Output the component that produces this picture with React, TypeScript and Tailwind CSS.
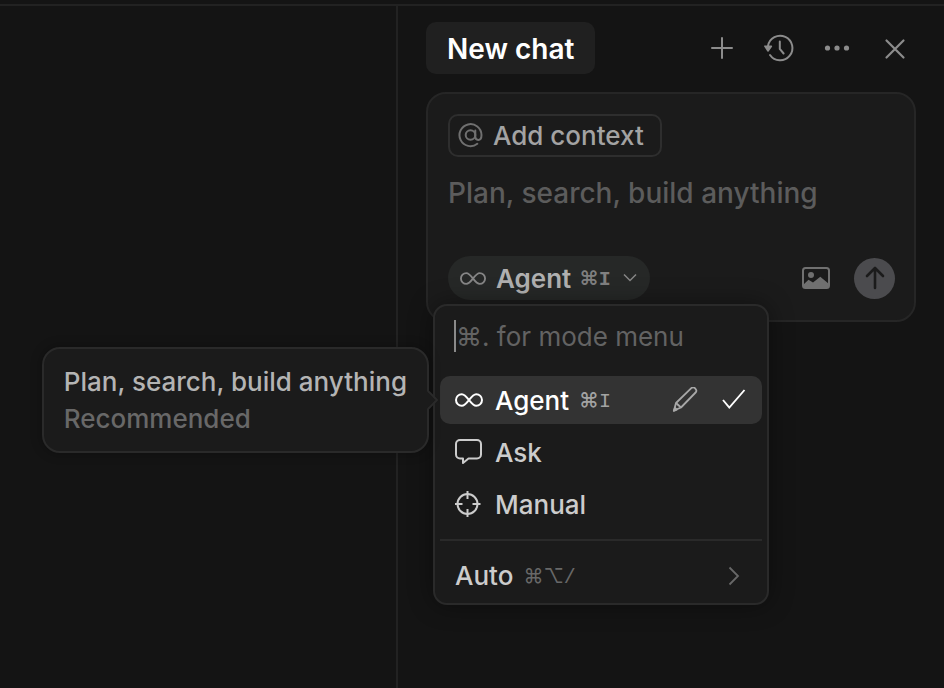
import type { ReactNode } from 'react'

type IconProps = {
  className?: string
}

type ModeRowProps = {
  icon: ReactNode
  label: string
  shortcut?: string
  active?: boolean
}

const InfinityIcon = ({ className }: IconProps) => (
  <svg viewBox="0 0 28 16" fill="none" stroke="currentColor" className={className}>
    <path
      d="M14 8C11.4 4.6 9.6 2.2 6.8 2.2a5.8 5.8 0 0 0 0 11.6C9.6 13.8 11.4 11.4 14 8s4.4-5.8 7.2-5.8a5.8 5.8 0 0 1 0 11.6C18.4 13.8 16.6 11.4 14 8Z"
      strokeWidth="2"
    />
  </svg>
)

const PlusIcon = () => (
  <svg width="28" height="28" viewBox="0 0 28 28" fill="none" stroke="currentColor" strokeWidth="2" strokeLinecap="round">
    <path d="M15 4v20M5 14h20" />
  </svg>
)

const HistoryIcon = () => (
  <svg width="32" height="32" viewBox="0 0 32 32" fill="none" stroke="currentColor" strokeWidth="2" strokeLinecap="round">
    <path d="M5 14A12.3 12.3 0 1 1 7 23" />
    <path d="M16.8 9.5v7.5l3.800 4.500" />
    <path d="M1.800 14.200h6.600L5 19Z" fill="currentColor" strokeWidth="1.500" strokeLinejoin="round" />
  </svg>
)

const DotsIcon = () => (
  <svg width="28" height="28" viewBox="0 0 28 28" fill="currentColor">
    <circle cx="4.500" cy="14" r="2.600" />
    <circle cx="14" cy="14" r="2.600" />
    <circle cx="23.500" cy="14" r="2.600" />
  </svg>
)

const CloseIcon = () => (
  <svg width="28" height="28" viewBox="0 0 28 28" fill="none" stroke="currentColor" strokeWidth="2.200" strokeLinecap="round">
    <path d="M5.500 6.500l17 17M22.500 6.500l-17 17" />
  </svg>
)

const AtIcon = () => (
  <svg width="26" height="26" viewBox="0 0 26 26" fill="none" stroke="currentColor" strokeWidth="2" strokeLinecap="round">
    <circle cx="12.500" cy="12" r="4.800" />
    <path d="M17.300 7.500v6.300c0 2 1.200 3.100 2.900 3.100 2.200 0 3.300-2 3.300-4.900A11 11 0 1 0 19.300 20.800" />
  </svg>
)

const ImageIcon = () => (
  <svg width="28" height="22" viewBox="0 0 28 22" fill="none">
    <rect x="1" y="1" width="26" height="20" rx="2.500" stroke="currentColor" strokeWidth="2" />
    <circle cx="9" cy="8" r="3" fill="currentColor" />
    <path d="M1 18l5.500-5.200L11 15.500l7.300-5.700L27 17v3l-2 1.500H3L1 20Z" fill="currentColor" />
  </svg>
)

const ArrowUpIcon = () => (
  <svg width="24" height="28" viewBox="0 0 24 28" fill="none" stroke="currentColor" strokeWidth="2.600" strokeLinecap="round" strokeLinejoin="round">
    <path d="M12 24V4M4 12l8-8 8 8" />
  </svg>
)

const ChatIcon = () => (
  <svg width="28" height="28" viewBox="0 0 28 28" fill="none" stroke="currentColor" strokeWidth="2" strokeLinejoin="round">
    <path d="M5 2h17a4 4 0 0 1 4 4v10.500a4 4 0 0 1-4 4H13.500L8 25v-4.500H5a4 4 0 0 1-4-4V6a4 4 0 0 1 4-4Z" />
  </svg>
)

const TargetIcon = () => (
  <svg width="26" height="26" viewBox="0 0 26 26" fill="none" stroke="currentColor" strokeWidth="2">
    <circle cx="12.500" cy="13" r="10" />
    <path d="M12.500 0v8M12.500 18v8M0 13h7.500M17.500 13h8" />
  </svg>
)

const PencilIcon = () => (
  <svg width="26" height="26" viewBox="0 0 26 26" fill="none" stroke="currentColor" strokeWidth="1.800" strokeLinejoin="round">
    <path d="M4 16L19.300 1.200c1.200-1.200 2.600-1 3.600 0l.6.600c1.200 1.200 1.200 2.600.1 3.700L9 20.500 2 23.500Z" />
    <path d="M4 16l5 4.500" />
    <path d="M3 20.800l1.800 1.800-3 1.200Z" fill="currentColor" />
  </svg>
)

const CheckIcon = () => (
  <svg width="24" height="22" viewBox="0 0 24 22" fill="none" stroke="currentColor" strokeWidth="1.900">
    <path d="M1 11l6.300 7.500L22.500 1" />
  </svg>
)

function Shortcut({ keys, className }: { keys: string; className: string }) {
  return (
    <kbd className={`mt-1 font-['Liberation_Mono','Inter',monospace] text-xl leading-6 ${className}`}>{keys}</kbd>
  )
}

function ModeTooltip() {
  return (
    <div
      role="tooltip"
      className="absolute top-1/2 right-full mr-[11px] -translate-y-1/2 rounded-[18px] border-2 border-[#2a2a2a] bg-[#1b1b1b] px-5 py-3.5 leading-[37px] font-[450] whitespace-nowrap shadow-[0_0_12px_rgba(0,0,0,0.3)]"
    >
      <p className="text-[#b4b4b4]">Plan, search, build anything</p>
      <p className="text-[#686868]">Recommended</p>
      <svg width="12" height="20" viewBox="0 0 12 20" className="absolute top-1/2 left-full -translate-y-1/2">
        <path d="M0 1l9 9-9 9Z" fill="#1b1b1b" />
        <path d="M1 1l9 9-9 9" fill="none" stroke="#2a2a2a" strokeWidth="2" />
      </svg>
    </div>
  )
}

function ModeRow({ icon, label, shortcut, active }: ModeRowProps) {
  return (
    <li
      className={`relative flex h-12 items-center rounded-[10px] pr-4 pl-[15px] ${
        active ? 'bg-[#333333] text-white' : 'text-[#cccccc]'
      }`}
    >
      {active && <ModeTooltip />}
      <button type="button" className="flex flex-1 items-center text-left font-medium">
        <span className="flex w-10 items-center">{icon}</span>
        {label}
        {shortcut && <Shortcut keys={shortcut} className="ml-2.5 text-[#a3a3a3]" />}
      </button>
      {active && (
        <div className="flex items-center gap-6">
          <button type="button" aria-label="Edit mode" className="text-[#a8a8a8]">
            <PencilIcon />
          </button>
          <CheckIcon />
        </div>
      )}
    </li>
  )
}

function ModeMenu() {
  return (
    <div className="absolute top-full left-0 z-10 mt-1 -ml-[15px] w-[336px] rounded-[14px] border-2 border-[#2a2a2a] bg-[#1b1b1b] px-[5px] shadow-[0_0_24px_rgba(0,0,0,0.4)]">
      <div className="flex items-center pt-3.5 pb-6 pl-3.5">
        <span className="h-8 w-0.5 shrink-0 bg-[#8a8a8a]" />
        <input
          type="text"
          aria-label="Filter modes"
          placeholder="⌘. for mode menu"
          className="h-8 w-full min-w-0 bg-transparent outline-none placeholder:text-[#636363]"
        />
      </div>
      <ul className="flex flex-col gap-1">
        <ModeRow icon={<InfinityIcon className="h-4 w-7" />} label="Agent" shortcut="⌘I" active />
        <ModeRow icon={<ChatIcon />} label="Ask" />
        <ModeRow icon={<TargetIcon />} label="Manual" />
      </ul>
      <hr className="mt-[11px] border-t-2 border-[#2a2a2a]" />
      <button type="button" className="flex w-full items-center pt-4 pr-[22px] pb-2 pl-[15px] text-left leading-[38px] font-medium text-[#cccccc]">
        Auto
        <Shortcut keys="⌘⌥/" className="ml-2.5 font-normal text-[#686868]" />
        <svg width="12" height="20" viewBox="0 0 12 20" fill="none" stroke="#686868" strokeWidth="1.800" className="ml-auto">
          <path d="M1.500 1.500L10 10l-8.500 8.500" />
        </svg>
      </button>
    </div>
  )
}

function ChatHeader() {
  return (
    <header className="flex items-center justify-between pr-[7px]">
      <button type="button" className="h-[52px] rounded-[10px] bg-[#202020] px-[21px] pt-0.5 text-[28px] font-semibold text-white">
        New chat
      </button>
      <div className="flex items-center gap-[30px] text-[#8c8c8c]">
        <button type="button" aria-label="New chat tab">
          <PlusIcon />
        </button>
        <button type="button" aria-label="Chat history" className="-mx-0.5">
          <HistoryIcon />
        </button>
        <button type="button" aria-label="More actions">
          <DotsIcon />
        </button>
        <button type="button" aria-label="Close">
          <CloseIcon />
        </button>
      </div>
    </header>
  )
}

function Composer() {
  return (
    <section className="mt-[18px] rounded-[20px] border-2 border-[#262626] bg-[#1b1b1b] py-5 pr-[19px] pl-5">
      <button type="button" className="flex h-[43px] items-center gap-[9px] rounded-[10px] border-2 border-[#2e2e2e] pr-4 pl-2 font-[450] text-[#a3a3a3]">
        <span className="text-[#707070]">
          <AtIcon />
        </span>
        Add context
      </button>
      <input
        type="text"
        aria-label="Message"
        placeholder="Plan, search, build anything"
        className="mt-[18px] block h-9 w-full bg-transparent text-[28px] font-[450] outline-none placeholder:text-[#5c5c5c]"
      />
      <div className="mt-[45px] flex items-center">
        <div className="relative">
          <button type="button" aria-haspopup="menu" aria-expanded="true" className="flex h-11 items-center rounded-full bg-[#262827] pr-[13px] pl-3 font-semibold text-[#b0b0b0]">
            <InfinityIcon className="mr-2.5 h-[15px] w-[26px] text-[#868686]" />
            Agent
            <Shortcut keys="⌘I" className="ml-2 text-[#808080]" />
            <svg width="14" height="10" viewBox="0 0 14 10" fill="none" stroke="#868686" strokeWidth="1.500" className="ml-3">
              <path d="M1 1.500l6 6 6-6" />
            </svg>
          </button>
          <ModeMenu />
        </div>
        <button type="button" aria-label="Attach image" className="ml-auto text-[#707070]">
          <ImageIcon />
        </button>
        <button type="button" aria-label="Send" className="ml-6 flex size-[41px] items-center justify-center rounded-full bg-[#4b4b4e] text-[#1b1b1b]">
          <ArrowUpIcon />
        </button>
      </div>
    </section>
  )
}

export default function App() {
  return (
    <div className="flex min-h-screen flex-col bg-[#141414] pt-1 font-['Inter',sans-serif] text-[26px]">
      <div className="flex grow border-t-2 border-[#222222]">
        <main className="flex-1" />
        <aside className="w-[548px] shrink-0 border-l-2 border-[#222222] px-7 pt-4">
          <ChatHeader />
          <Composer />
        </aside>
      </div>
    </div>
  )
}
